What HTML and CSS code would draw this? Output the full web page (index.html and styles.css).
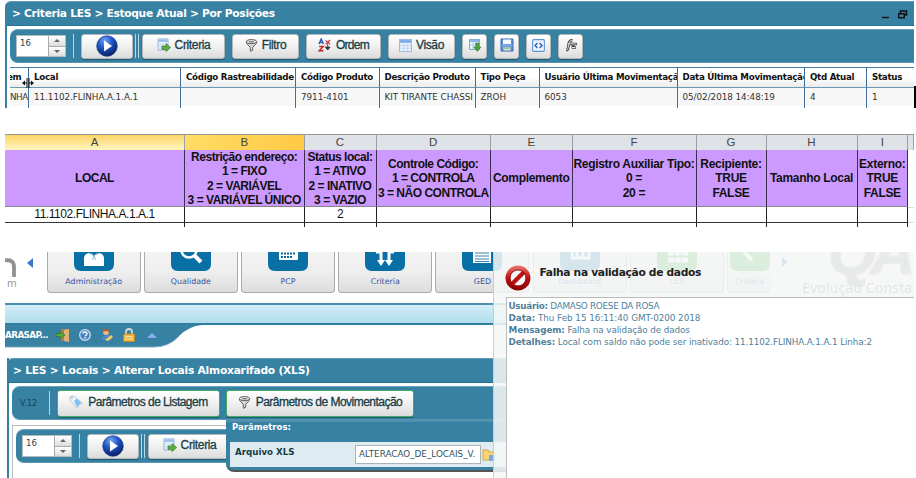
FILE: index.html
```html
<!DOCTYPE html>
<html lang="pt-BR">
<head>
<meta charset="utf-8">
<title>Estoque Atual</title>
<link rel="stylesheet" href="styles.css">
</head>
<body>
<svg class="defs" aria-hidden="true">
  <defs>
    <radialGradient id="ball" cx="40%" cy="25%" r="80%"><stop offset="0" stop-color="#7da5ee"/><stop offset=".45" stop-color="#1c55c8"/><stop offset="1" stop-color="#08194f"/></radialGradient>
    <linearGradient id="red" x2="0" y2="1"><stop offset="0" stop-color="#e87975"/><stop offset=".5" stop-color="#bd1010"/><stop offset="1" stop-color="#860000"/></linearGradient>
    <symbol id="play" viewBox="0 0 22 22"><circle cx="11" cy="11" r="10.3" fill="url(#ball)" stroke="#183d96" stroke-width=".7"/><path d="M8 5.5v11l8-5.5z" fill="#fff"/></symbol>
    <symbol id="crit" viewBox="0 0 14 14"><path d="M1 1h10v11H1z" fill="#eef5fd" stroke="#8eb2dc"/><path d="M1.5 1.5h9V4h-9z" fill="#9dc1ee"/><path d="M2 6h8M2 8h8M2 10h4" stroke="#c3d8f1"/><path d="M5 8h4V5.600l4.600 4-4.600 4V11.500H5z" fill="#62ac48" stroke="#3b7f2b" stroke-width=".7"/></symbol>
    <symbol id="funnel" viewBox="0 0 12 13"><path d="M1 3v1.300l3.800 4V12.300l2.400-1V8.300L11 4.300V3z" fill="#d8d8d8" stroke="#555" stroke-width=".9"/><ellipse cx="6" cy="2.600" rx="5.200" ry="2" fill="#f5f5f5" stroke="#444" stroke-width=".9"/><ellipse cx="6" cy="2.700" rx="3" ry=".8" fill="#777"/></symbol>
    <symbol id="grid" viewBox="0 0 12 12"><path d="M.5.5h11v11H.5z" fill="#eaf3fd" stroke="#9cbbe2"/><path d="M1 1h10v2.500H1z" fill="#78a9e4"/><path d="M4.500 3v8M8 3v8M1 6h10M1 8.500h10" stroke="#bcd4f2" stroke-width=".8"/></symbol>
    <symbol id="down" viewBox="0 0 14 14"><path d="M1.500 1.500h10v10h-10z" fill="#eaf3fd" stroke="#81a7d7"/><path d="M2 2h9v2H2z" fill="#8cb6e8"/><path d="M5 4v7M2 7h9" stroke="#b5cff0"/><path d="M7.700 5h3v4H13l-3.700 4.500L5.700 9h2z" fill="#4ca143" stroke="#2f7a29" stroke-width=".6"/></symbol>
    <symbol id="save" viewBox="0 0 14 14"><path d="M1 1h12v12H1z" fill="#5d91dc" stroke="#3768b4"/><path d="M3 1.500h8V6H3z" fill="#f7faff"/><path d="M1.500 6.500h11v2h-11z" fill="#7dabe8"/><path d="M3.500 9h7v3.500h-7z" fill="#d5e4d5"/><path d="M4 10h6" stroke="#72a66a"/></symbol>
    <symbol id="code" viewBox="0 0 12 12"><rect x=".6" y=".6" width="10.800" height="10.800" rx="1" fill="#eef5ff" stroke="#5e90d5"/><path d="M5 3.800 2.800 6 5 8.200M7 3.800 9.200 6 7 8.200" fill="none" stroke="#2563bd" stroke-width="1.300"/></symbol>
    <symbol id="func" viewBox="0 0 14 12"><path d="M2 11q2 0 2.300-3l.8-4Q5.600 1 8.500 1.500M3 4.800h5.200M8 5h5M8 8.500h4M9 4v5.500" fill="none" stroke="#444" stroke-width="2.700"/><path d="M2 11q2 0 2.300-3l.8-4Q5.600 1 8.500 1.500M3 4.800h5.200M8 5h4.500M8 8.500h3.500" fill="none" stroke="#eee" stroke-width=".9"/></symbol>
    <symbol id="sort" viewBox="0 0 14 14"><path d="M1 6 3.200 1 5.500 6M1.900 4.500h2.700" fill="none" stroke="#285bb3" stroke-width="1.400"/><path d="M1.200 8.500h4L1.300 12.800h4.200" fill="none" stroke="#c32828" stroke-width="1.500"/><path d="M7.500 2.500 12 6M12 2 7.700 6.300" stroke="#c93838" stroke-width="1.200"/><path d="M9.700 5.500v6M7.300 9l2.400 3 2.400-3z" fill="#333" stroke="#333" stroke-width=".8"/></symbol>
    <symbol id="tag" viewBox="0 0 14 14"><path d="M1 5V1.500L5 1l8 7-5 5z" fill="#f3f8fe" stroke="#b7c5d3"/><path d="m5 6 3-2.500L12 8l-4 4z" fill="#83c0f2"/><circle cx="3" cy="3" r="1" fill="#bbb"/></symbol>
  </defs>
</svg>

<section class="stock">
  <header class="bar"><h1 class="ttl ttl-stock">&gt; Criteria LES &gt; Estoque Atual &gt; Por Posições</h1>
    <svg class="winctl" viewBox="0 0 26 10"><path d="M0 7.500h7" stroke="#111" stroke-width="1.400"/><path d="M18.500 3V1h6v4h-2" fill="none" stroke="#111" stroke-width="1.600"/><path d="M16.700 3.700h5.600v4h-5.600z" fill="none" stroke="#111" stroke-width="1.400"/></svg>
  </header>
  <div class="tools">
    <div class="spin"><span>16</span><i class="steps"><b class="up"></b><b class="dn"></b></i></div>
    <i class="sep"></i>
    <button class="btn w-play"><svg class="i22"><use href="#play"/></svg></button>
    <i class="sep2"></i>
    <button class="btn w-crit"><svg class="i14"><use href="#crit"/></svg><span>Criteria</span></button>
    <button class="btn w-filt"><svg class="i13"><use href="#funnel"/></svg><span>Filtro</span></button>
    <button class="btn w-ord"><svg class="i14"><use href="#sort"/></svg><span>Ordem</span></button>
    <button class="btn w-filt"><svg class="i13"><use href="#grid"/></svg><span>Visão</span></button>
    <button class="btn w-ico"><svg class="i14"><use href="#down"/></svg></button>
    <button class="btn w-ico"><svg class="i14"><use href="#save"/></svg></button>
    <button class="btn w-ico"><svg class="i13"><use href="#code"/></svg></button>
    <button class="btn w-ico"><svg class="i14"><use href="#func"/></svg></button>
  </div>
  <div class="grid">
    <div class="th first">em</div><div class="th">Local</div><div class="th">Código Rastreabilidade</div><div class="th">Código Produto</div><div class="th">Descrição Produto</div><div class="th">Tipo Peça</div><div class="th">Usuário Última Movimentação</div><div class="th">Data Última Movimentação</div><div class="th">Qtd Atual</div><div class="th">Status</div>
    <div class="td first">NHA</div><div class="td">11.1102.FLINHA.A.1.A.1</div><div class="td"></div><div class="td">7911-4101</div><div class="td">KIT TIRANTE CHASSI</div><div class="td">ZROH</div><div class="td">6053</div><div class="td">05/02/2018 14:48:19</div><div class="td">4</div><div class="td">1</div>
  </div>
  <svg class="resize" viewBox="0 0 12 10"><path d="M5 0v10M7 0v10M1 5h4M7 5h4" stroke="#111"/><path d="M0 5l3-2.500v5zM12 5 9 2.500v5z" fill="#111"/></svg>
  <i class="edge"></i>
</section>

<section class="sheet">
  <div class="col sel">A</div><div class="col sel deep">B</div><div class="col">C</div><div class="col">D</div><div class="col">E</div><div class="col">F</div><div class="col">G</div><div class="col">H</div><div class="col">I</div><div class="col"></div>
  <div class="hd tight">LOCAL</div><div class="hd tight">Restrição endereço:<br>1 = FIXO<br>2 = VARIÁVEL<br>3 = VARIÁVEL ÚNICO</div><div class="hd tight">Status local:<br>1 = ATIVO<br>2 = INATIVO<br>3 = VAZIO</div><div class="hd tight">Controle Código:<br>1 = CONTROLA<br>3 = NÃO CONTROLA</div><div class="hd">Complemento</div><div class="hd">Registro Auxiliar Tipo:<br>0 =<br>20 =</div><div class="hd">Recipiente:<br>TRUE<br>FALSE</div><div class="hd">Tamanho Local</div><div class="hd">Externo:<br>TRUE<br>FALSE</div><div class="out"></div>
  <div class="ce">11.1102.FLINHA.A.1.A.1</div><div class="ce"></div><div class="ce">2</div><div class="ce"></div><div class="ce"></div><div class="ce"></div><div class="ce"></div><div class="ce"></div><div class="ce"></div><div class="out line"></div>
  <div class="ce"></div><div class="ce"></div><div class="ce"></div><div class="ce"></div><div class="ce"></div><div class="ce"></div><div class="ce"></div><div class="ce"></div><div class="ce"></div><div class="out"></div>
</section>

<section class="app">
  <nav class="nav">
    <div class="brand"><svg class="logo" viewBox="0 0 24 44"><path d="M0 8.500Q9 7 9 15V25" fill="none" stroke="#8f9295" stroke-width="3.800"/></svg><small>m</small><i class="left"></i></div>
    <div class="tile"><svg class="pic" viewBox="0 0 40 20"><path class="plate" d="M0-8h40v20q0 7-7 7H7q-7 0-7-7z"/><path d="M10 14V6q0-4 5-5l5 3 5-3q5 1 5 5v8z" fill="#fff"/><path d="M17 1l3 3 3-3M18.500 8 20 3l1.500 5" fill="none" stroke="#8fb9ce"/></svg><span>Administração</span></div>
    <div class="tile"><svg class="pic" viewBox="0 0 40 20"><path class="plate" d="M0-8h40v20q0 7-7 7H7q-7 0-7-7z"/><circle cx="18" cy="-2" r="7.500" fill="none" stroke="#fff" stroke-width="2.500"/><path d="m23 3 7 7" stroke="#fff" stroke-width="4"/></svg><span>Qualidade</span></div>
    <div class="tile"><svg class="pic" viewBox="0 0 40 20"><path class="plate" d="M0-8h40v20q0 7-7 7H7q-7 0-7-7z"/><rect x="11" y="-8" width="19" height="16" rx="1" fill="#fff"/><path d="M13 1.500h15M13 5h12" stroke="#0d6798" stroke-width="2" stroke-dasharray="2 1"/></svg><span>PCP</span></div>
    <div class="tile"><svg class="pic" viewBox="0 0 40 20"><path class="plate" d="M0-8h40v20q0 7-7 7H7q-7 0-7-7z"/><path d="M11 0h6M23 0h6M16 0v10M24 0v10" stroke="#fff" stroke-width="3"/><path d="m12 8 4 6 4-6zM20 8l4 6 4-6z" fill="#fff"/></svg><span>Criteria</span></div>
    <div class="tile"><svg class="pic" viewBox="0 0 40 20"><path class="plate" d="M0-8h40v20q0 7-7 7H7q-7 0-7-7z"/><path d="M11 0h18v11H11z" fill="#fff"/><path d="M13 1h14M13 4h14M13 7h14M13 9.500h14" stroke="#3482aa"/></svg><span>GED</span></div>
    <div class="tile"><svg class="pic" viewBox="0 0 40 20"><path class="plate" d="M0-8h40v20q0 7-7 7H7q-7 0-7-7z"/><path d="M12 0v6h17V0M17 0v6M23 0v6" fill="none" stroke="#fff" stroke-width="3"/></svg><span>Dashboard</span></div>
    <div class="tile green"><svg class="pic" viewBox="0 0 40 20"><path class="plate" d="M0-8h40v20q0 7-7 7H7q-7 0-7-7z"/><path d="M11 1h20M11 8h20" stroke="#fff" stroke-width="5" stroke-dasharray="6 1"/></svg><span>LES</span></div>
    <div class="tile green cut"><svg class="pic" viewBox="0 0 40 20"><path class="plate" d="M0-8h40v20q0 7-7 7H7q-7 0-7-7z"/><path d="m14 0 8 8" stroke="#fff" stroke-width="4"/></svg><span>Criteria</span></div>
    <div class="qad"><i class="right"></i><strong>QA</strong><p>Evolução Constante</p></div>
  </nav>
  <div class="strip"></div>
  <div class="user">
    <svg class="curve" viewBox="0 0 200 23" preserveAspectRatio="none"><path d="M0 0H197Q184 1 174 11 164 22 149 22H0z" fill="#3781a2"/><path d="M0 22h149Q164 22 174 11" fill="none" stroke="#73a9c1"/></svg>
    <div class="urow"><b>ARASAP...</b>
      <svg class="u u1" viewBox="0 0 14 14"><path d="M5 1h8v12H5z" fill="#b57d48"/><path d="m8 2 5-1v13l-5-1z" fill="#dfb27a"/><path d="M0 5.500h4V3l5 4-5 4V8.500H0z" fill="#54a63e" stroke="#276d25" stroke-width=".6"/></svg>
      <svg class="u u2" viewBox="0 0 14 14"><circle cx="7" cy="7" r="5.300" fill="#4c87c5" stroke="#c9def2" stroke-width="1.300"/><path d="M5 5.500Q5 4 7 4t2 1.500T7 8M7 9v1.500" fill="none" stroke="#fff" stroke-width="1.300"/></svg>
      <svg class="u u3" viewBox="0 0 14 14"><path d="M2 12q0-5 5-5 4 0 5 5z" fill="#4e87d4"/><circle cx="6" cy="4" r="3" fill="#f0b785"/><path d="M3 4q0-4 4-3 3 1 2 3-3-2-6 0" fill="#b55c24"/><path d="m5 12 6-5 2 2-5 4z" fill="#f3cf58"/></svg>
      <svg class="u u4" viewBox="0 0 14 14"><path d="M4 7V4q0-3 3-3t3 3v3" fill="none" stroke="#d7d9d8" stroke-width="1.800"/><rect x="1.500" y="6" width="11" height="7.500" rx="1" fill="#f2b646" stroke="#c98921"/><path d="M3 8.500h8M3 11h8" stroke="#fce49d"/></svg>
      <i class="tri"></i></div>
  </div>
  <div class="win">
    <header class="bar"><h2 class="ttl ttl-xls">&gt; LES &gt; Locais &gt; Alterar Locais Almoxarifado (XLS)</h2></header>
    <div class="tools params"><span class="ver">V.12</span><i class="sep"></i>
      <button class="btn big p1"><svg class="i14"><use href="#tag"/></svg><span>Parâmetros de Listagem</span></button>
      <button class="btn big p2"><svg class="i13"><use href="#funnel"/></svg><span>Parâmetros de Movimentação</span></button>
    </div>
    <div class="inner"><div class="tools">
      <div class="spin"><span>16</span><i class="steps"><b class="up"></b><b class="dn"></b></i></div>
      <i class="sep"></i>
      <button class="btn w-play"><svg class="i22"><use href="#play"/></svg></button>
      <i class="sep2"></i>
      <button class="btn w-crit"><svg class="i14"><use href="#crit"/></svg><span>Criteria</span></button>
    </div></div>
  </div>
  <div class="drop">
    <h3>Parâmetros:</h3>
    <div class="field"><label>Arquivo XLS</label><div class="inp">ALTERACAO_DE_LOCAIS_V.</div><svg class="i14" viewBox="0 0 14 14"><path d="M1 12V2h5l1 2h6v8z" fill="#f8d477" stroke="#d8a33d"/><path d="M7 7h6v6H7z" fill="#78a8e4"/></svg></div>
  </div>
  <div class="dialog">
    <div class="dhead">
      <svg class="stop" viewBox="0 0 26 26"><circle cx="13" cy="13" r="12.500" fill="url(#red)"/><circle cx="13" cy="13" r="7.700" fill="#f4f4f4"/><path d="M7 19 19 7" stroke="#b91212" stroke-width="4.200"/><circle cx="13" cy="13" r="8" fill="none" stroke="#8c0505" stroke-width=".7"/></svg>
      <h2>Falha na validação de dados</h2>
    </div>
    <div class="msg">
      <p class="who"><b>Usuário:</b> DAMASO ROESE DA ROSA</p>
      <p><b>Data:</b> Thu Feb 15 16:11:40 GMT-0200 2018</p>
      <p class="snug"><b>Mensagem:</b> Falha na validação de dados</p>
      <p class="snug"><b>Detalhes:</b> Local com saldo não pode ser inativado: 11.1102.FLINHA.A.1.A.1 Linha:2</p>
    </div>
  </div>
</section>
</body>
</html>
```
FILE: styles.css
```css
* { box-sizing: border-box; }
body { margin: 0; width: 916px; height: 478px; overflow: hidden; background: #fff; font-family: "DejaVu Sans", sans-serif; color: #222; }
h1, h2, h3, p { margin: 0; }
.defs { position: absolute; width: 0; height: 0; }
svg { flex: none; }

.stock { position: relative; height: 108px; margin: 0 2px 0 5px; padding-top: 1px; }
.stock::before { content: ""; position: absolute; left: 0; top: 22px; width: 2px; height: 86px; background: #3781a2; }
.bar { height: 25px; display: flex; align-items: center; justify-content: space-between; background: #3781a2; border-top: 1px solid #5f9bb6; border-bottom: 1px solid #25708f; border-radius: 6px 0 0 0; padding: 0 6px 0 7px; }
.ttl { color: #fff; font-size: 10.700px; font-weight: bold; white-space: nowrap; line-height: 22px; }
.ttl-stock { letter-spacing: -.32px; }
.ttl-xls { letter-spacing: -.24px; margin-left: -1px; }
.winctl { width: 26px; height: 10px; margin-top: 3px; }
.tools { display: flex; align-items: center; height: 34px; background: #3781a2; border-top: 1px solid #6ba3bc; border-bottom: 1px solid #5c97b2; border-radius: 8px 0 0 8px; padding-left: 6px; }
.stock .tools { margin: 3px 0 4px 5px; }
.spin { display: flex; width: 50px; height: 22px; background: #fff; border: 1px solid #b5bcc0; font-size: 8.500px; color: #24434e; padding-left: 3px; line-height: 15px; }
.spin span { flex: 1; }
.steps { width: 17px; display: grid; gap: 1px; background: #aaa; border-left: 1px solid #aaa; }
.steps b { background: linear-gradient(#fff, #ddd); display: flex; align-items: center; justify-content: center; }
.steps b::after { content: ""; border: 3px solid transparent; }
.up::after { border-bottom-color: #666 !important; border-top-width: 0 !important; }
.dn::after { border-top-color: #666 !important; border-bottom-width: 0 !important; }
.sep { width: 1px; height: 24px; background: #bcd7e2; margin: 0 7px; }
.sep2 { width: 4px; height: 24px; border: solid #bcd7e2; border-width: 0 1px; margin: 0 3px 0 2px; }
.btn { flex: none; display: flex; align-items: center; justify-content: center; height: 25px; padding: 0 0 2px; border: 1px solid #b4b7b9; border-radius: 3px; background: linear-gradient(#fff, #f0f0f0 50%, #dcdcdc); box-shadow: 0 1px 1px #23586f; font: 12px "Liberation Sans", sans-serif; letter-spacing: -.35px; color: #173d48; -webkit-text-stroke: .3px #173d48; gap: 4px; white-space: nowrap; }
.w-play { width: 52px; }
.w-crit { width: 83px; margin-right: 7px; }
.w-filt { width: 67px; margin-right: 7px; }
.w-ord { width: 75px; margin-right: 7px; }
.w-ord span { letter-spacing: -.7px; }
.w-ico { width: 25px; margin-right: 7px; }
.i22 { width: 22px; height: 22px; margin-top: 1px; }
.i14 { width: 14px; height: 14px; }
.i13 { width: 13px; height: 13px; }

.grid { display: grid; grid-template-columns: 19px 152px 115px 83.500px 96px 64px 138px 127.500px 62px 1fr; grid-template-rows: 20px 21px; margin-left: 5px; border-top: 1px solid #4d7fa6; height: 41px; overflow: hidden; }
.th, .td { overflow: hidden; white-space: nowrap; padding-left: 5px; border-right: 1px solid #416d99; line-height: 19px; }
.th { font-weight: bold; background: linear-gradient(#fff, #fff 50%, #ebebeb); border-bottom: 1px solid #6b98b3; font-size: 8.700px; letter-spacing: -.28px; color: #111; }
.td { background: linear-gradient(#f7f7f7 18px, #fff 18px); color: #333; font-size: 8.800px; letter-spacing: -.04px; line-height: 18px; }
.first { padding-left: 0; }
.th.first { text-indent: -3px; }
.td.first { letter-spacing: -.5px; }
.th:nth-child(10), .td:nth-child(20) { border-right: 0; }
.resize { position: absolute; left: 17px; top: 78px; width: 12px; height: 10px; }
.edge { position: absolute; right: -2px; top: 86px; width: 2px; height: 22px; background: #000; }

.sheet { display: grid; grid-template-columns: 180px 119.500px 72px 114.500px 81.500px 124px 70px 91px 50.500px 1fr; grid-template-rows: 16px 57px 16px 4.500px; margin: 26px 2px 0 5px; font-family: "Liberation Sans", sans-serif; font-size: 12px; color: #111; height: 93px; overflow: hidden; }
.col { background: #dfe3e8; border-top: 1px solid #969696; border-right: 1px solid #9ba0a6; text-align: center; line-height: 14px; color: #444; font-size: 11.500px; }
.sel { background: linear-gradient(#fbd568, #fff6c0); }
.deep { background: linear-gradient(90deg, #ffdc65, #ffca45); }
.hd { background: #c9f; border-right: 1px solid #3d2b50; border-bottom: 1px solid #888; display: flex; align-items: center; justify-content: center; text-align: center; font-weight: bold; line-height: 14.300px; white-space: nowrap; font-size: 12px; letter-spacing: -.3px; padding-top: 1px; }
.hd.tight { letter-spacing: -.48px; }
.ce { border-right: 1px solid #222; border-bottom: 1px solid #333; text-align: center; line-height: 15px; letter-spacing: -.45px; }
.line { border-bottom: 1px solid #ddd; border-top: 1px solid #ddd; }

.app { position: relative; height: 226px; margin: 25px 2px 0 5px; overflow: hidden; }
.nav { display: flex; height: 51px; gap: 3.200px; }
.brand { width: 38.500px; flex: none; display: flex; position: relative; }
.logo { width: 24px; height: 44px; }
.brand small { position: absolute; left: 2px; top: 26px; font-size: 10px; line-height: 12px; color: #999; }
.left { border: solid transparent; border-width: 5px 6px 5px 0; border-right-color: #3a78d0; height: 0; margin: 6px 0 0 -2px; }
.tile { width: 94px; height: 41px; flex: none; display: flex; flex-direction: column; align-items: center; background: linear-gradient(#f3f3f3, #eee 50%, #dcdcdc); border: 1px solid #aaa; border-top: 0; border-radius: 0 0 4px 4px; font-size: 7.900px; color: #3553a5; }
.tile span { margin-top: 5px; }
.pic { width: 40px; height: 20px; }
.plate { fill: #0870a5; }
.green { border-color: #a5cc55; }
.green .plate { fill: #35a935; }
.cut { width: 44px; overflow: hidden; border-right: 0; }
.qad { width: 150px; flex: none; position: relative; margin-left: 0; font-family: "Open Sans", sans-serif; }
.right { position: absolute; left: 8px; top: 5px; border: solid transparent; border-width: 5px 0 5px 6px; border-left-color: #2c78d0; }
.qad strong { position: absolute; left: 54px; top: -30px; font: bold italic 62px/62px "Liberation Sans", sans-serif; color: #8b9c90; letter-spacing: -6px; -webkit-text-stroke: 1.500px #c99; }
.qad p { position: absolute; left: 28px; top: 27px; font-size: 14px; line-height: 18px; color: #666; white-space: nowrap; letter-spacing: .2px; }
.strip { height: 22px; border-top: 2px solid #4a90b1; border-bottom: 2px solid #2f7d9f; background: linear-gradient(#d4eef8, #b0dced); }
.user { position: relative; height: 23px; }
.curve { position: absolute; width: 200px; height: 23px; }
.urow { position: relative; display: flex; align-items: center; height: 20px; color: #fff; font-size: 8.800px; }
.urow b { width: 51px; white-space: nowrap; letter-spacing: -.6px; }
.u { width: 14px; height: 14px; }
.u2, .u3 { margin-left: 8px; }
.u4 { margin-left: 8px; }
.tri { border: solid transparent; border-width: 0 5px 5px; border-bottom-color: #83aef0; margin-left: 11px; }
.win { margin: 10px 0 0 2px; height: 130px; border-left: 2px solid #3781a2; }
.win .bar { margin-left: -2px; }
.win .tools { height: 34px; margin-left: 3px; }
.win .params { margin-top: 3px; }
.ver { font-size: 8px; color: #153f51; width: 24px; margin-left: 2px; }
.params .sep { margin: 0 7px 0 5px; }
.big { height: 27px; border: 1px solid #3faf67; color: #173d48; gap: 5px; letter-spacing: -.52px; }
.p1 { width: 163px; margin-right: 6px; }
.p2 { width: 188px; }
.inner { border: 1px solid #bbb; border-width: 1px 0 0 1px; margin: 5px 0 0 3px; padding-top: 3px; height: 60px; }
.drop { position: absolute; left: 221px; top: 168px; width: 290px; height: 52px; background: #3781a2; border-top: 2px solid #4e91af; border-bottom: 2px solid #555; border-radius: 0 0 0 8px; padding-left: 4px; }
.drop h3 { font-size: 8.500px; line-height: 11px; color: #fff; padding-left: 2px; height: 20px; }
.field { height: 25px; background: #deecf2; display: flex; align-items: center; padding-left: 5px; }
.field label { width: 120px; font-size: 8.700px; font-weight: bold; color: #173d48; margin-top: -6px; }
.inp { width: 126px; height: 19px; border: 1px solid #aab4b8; background: #fff; font-size: 8.800px; line-height: 17px; padding-left: 3px; overflow: hidden; white-space: nowrap; color: #34525d; margin-right: 1px; }
.dialog { position: absolute; left: 487.500px; top: 0; width: 421.500px; height: 226px; background: rgba(244, 247, 246, .87); border-left: 1px solid #c6cfd1; padding-left: 12px; }
.dhead { height: 45px; display: flex; }
.stop { width: 26px; height: 26px; margin: 13px 9px 0 -1px; }
.dhead h2 { font-size: 10.700px; letter-spacing: -.33px; line-height: 16px; margin-top: 13px; color: #222; white-space: nowrap; }
.msg { height: 181px; border: 1px solid #bbb; border-width: 1px 0 0 1px; background: #fff; padding: 2px 0 0 2px; font-size: 8.800px; line-height: 12px; color: #4f7f9b; white-space: nowrap; letter-spacing: -.04px; }
.who { letter-spacing: -.27px; }
.snug { letter-spacing: -.09px; }
```
